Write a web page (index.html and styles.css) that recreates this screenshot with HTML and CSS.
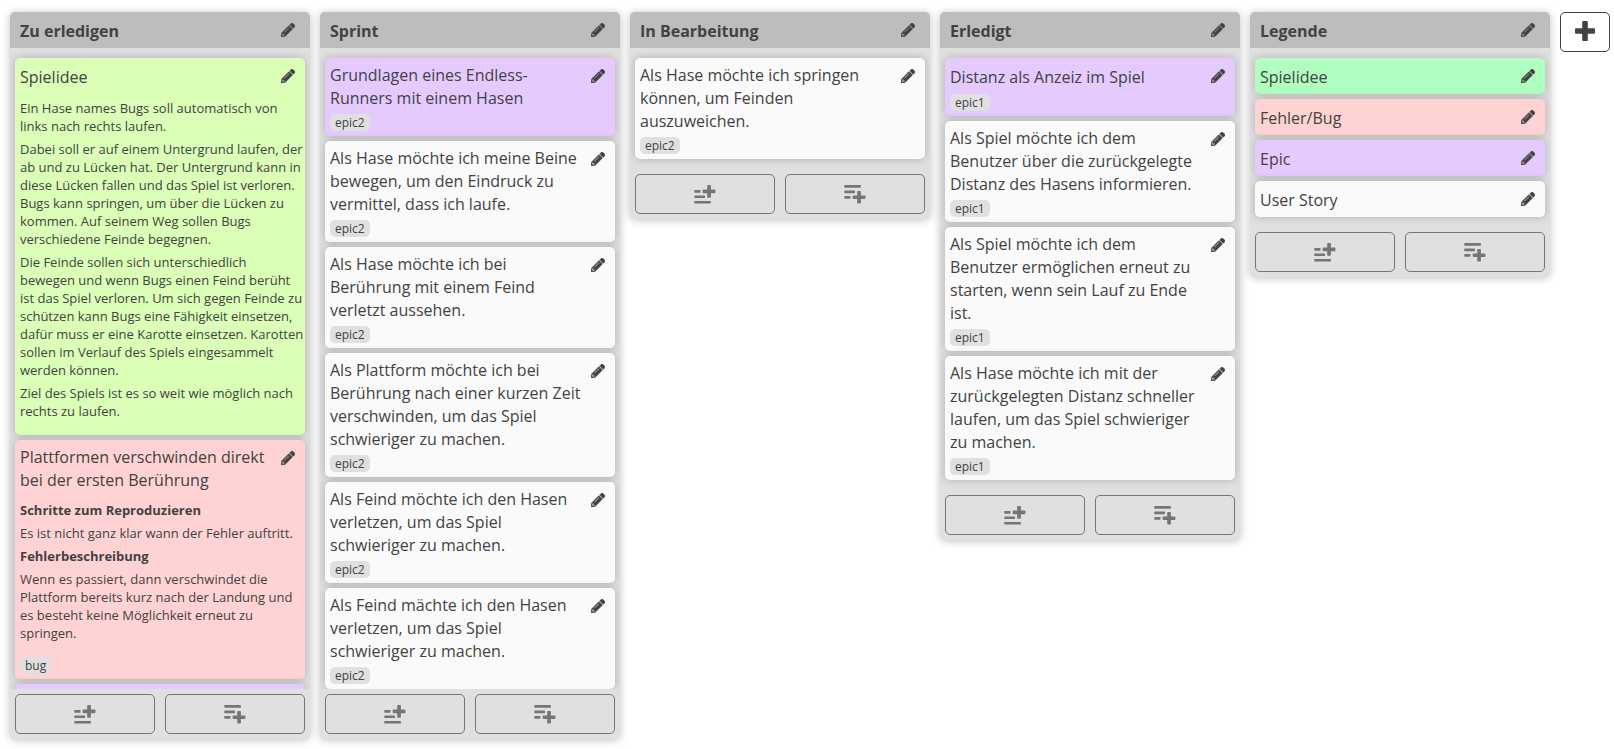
FILE: index.html
```html
<!DOCTYPE html>
<html lang="de">
<head>
<meta charset="utf-8">
<title>Kanban</title>
<link rel="stylesheet" href="styles.css">
</head>
<body>
<svg class="sprite" aria-hidden="true">
  <symbol id="pencil" viewBox="0 0 512 512"><path stroke="currentColor" stroke-width="16" d="M497.9 142.1l-46.1 46.1c-4.7 4.7-12.3 4.7-17 0l-111-111c-4.7-4.7-4.7-12.3 0-17l46.1-46.1c18.7-18.7 49.1-18.7 67.9 0l60.1 60.1c18.8 18.7 18.8 49.1 0 67.9zM284.2 99.8L21.6 362.4.4 483.9c-2.9 16.4 11.4 30.6 27.8 27.8l121.5-21.3 262.6-262.6c4.7-4.7 4.7-12.3 0-17l-111-111c-4.8-4.7-12.4-4.7-17.1 0zM124.1 339.9c-5.5-5.5-5.5-14.3 0-19.8l154-154c5.5-5.5 14.3-5.5 19.8 0s5.5 14.3 0 19.8l-154 154c-5.5 5.5-14.3 5.5-19.8 0zM88 424h48v36.3l-64.5 11.3-31.1-31.1L51.7 376H88v48z"/></symbol>
  <symbol id="plus" viewBox="0 0 20 20"><path d="M8.2 0h3.6q1 0 1 1v6.200H19q1 0 1 1v3.600q0 1-1 1h-6.200V19q0 1-1 1H8.200q-1 0-1-1v-6.200H1q-1 0-1-1V8.200q0-1 1-1h6.200V1q0-1 1-1z"/></symbol>
  <symbol id="add-top" viewBox="0 0 22 20">
    <rect x=".3" y="6" width="6.200" height="2.700" rx=".6"/>
    <rect x=".3" y="11.400" width="10.700" height="2.700" rx=".6"/>
    <rect x=".3" y="16.900" width="16.600" height="2.700" rx=".6"/>
    <rect x="8.700" y="5.500" width="12.700" height="3.700" rx=".8"/>
    <rect x="13.200" y="1" width="3.700" height="12.700" rx=".8"/>
  </symbol>
  <symbol id="add-bottom" viewBox="0 0 22 20">
    <rect x=".3" y="1" width="16.600" height="2.700" rx=".6"/>
    <rect x=".3" y="6.500" width="10.700" height="2.700" rx=".6"/>
    <rect x=".3" y="12" width="6.200" height="2.700" rx=".6"/>
    <rect x="8.700" y="11.400" width="12.700" height="3.700" rx=".8"/>
    <rect x="13.200" y="6.900" width="3.700" height="12.700" rx=".8"/>
  </symbol>
</svg>

<main class="board" id="board"></main>
<script src="board.js"></script>
</body>
</html>
```
FILE: styles.css
```css
* { box-sizing: border-box; }

body {
  margin: 0;
  background: #fff;
  color: #424242;
  font: 16px/23px "Open Sans", "Noto Sans", sans-serif;
}

.sprite { display: none; }

.icon { display: block; overflow: visible; fill: currentColor; }
.icon-pencil { width: 14px; height: 14px; }
.icon-plus { width: 20px; height: 20px; }
.icon-add { width: 22px; height: 20px; }

button {
  display: flex;
  align-items: center;
  justify-content: center;
  padding: 0;
  border: 0;
  background: none;
  color: inherit;
  font: inherit;
  cursor: pointer;
}

.board {
  display: flex;
  align-items: flex-start;
  gap: 10px;
  height: 100vh;
  padding: 12px 0 10px 10px;
  overflow: hidden;
}

.column {
  display: flex;
  flex: 0 0 300px;
  flex-direction: column;
  max-height: 100%;
  border-radius: 5px;
  background: #e0e0e0;
  box-shadow: 0 1px 8px rgba(0, 0, 0, 0.25);
}

.column-head {
  display: flex;
  flex: none;
  align-items: center;
  justify-content: space-between;
  padding: 5px 10px;
  border-radius: 5px 5px 0 0;
  background: #bdbdbd;
}

.column-title,
.card-title {
  margin: 1px 0 -1px;
  font-size: 16px;
}

.column-title { font-weight: 700; }

.card-title { align-self: center; font-weight: 400; }

.edit { flex: none; width: 24px; height: 26px; }

.cards {
  display: flex;
  flex-direction: column;
  gap: 5px;
  min-height: 0;
  padding: 10px 5px;
  overflow: hidden;
}

.card {
  flex: none;
  padding: 5px 1px 5px 5px;
  border-radius: 5px;
  background: #fafafa;
  box-shadow: 0 0 8px rgba(0, 0, 0, 0.22);
}

.card-lime { background: #dbffb7; }
.card-green { background: #b0ffc1; }
.card-red { background: #ffd3d3; }
.card-purple { background: #e4caff; }

.card-head {
  display: flex;
  align-items: flex-start;
  justify-content: space-between;
  gap: 5px;
  padding-right: 4px;
}

.card-text { padding: 10px 0; font-size: 13px; line-height: 18px; }
.card-text p { margin: 0; }
.card-text p + p { margin-top: 5px; }

.tags { display: flex; gap: 5px; margin-top: 5px; }

.tag {
  padding: 0 5px;
  border-radius: 5px;
  background: #e0e0e0;
  font-size: 12px;
  line-height: 17px;
}

.column-foot {
  display: grid;
  flex: none;
  grid-template-columns: 1fr 1fr;
  gap: 10px;
  padding: 5px;
}

.add-card {
  height: 40px;
  border: 1px solid #757575;
  border-radius: 5px;
  color: #757575;
}

.add-column {
  flex: 0 0 50px;
  height: 40px;
  padding-bottom: 2px;
  border: 1px solid #424242;
  border-radius: 5px;
}
```
FILE: board.js
```js
const columns = [
  { title: "Zu erledigen", cards: [
    { title: "Spielidee", color: "lime", text: [
      "Ein Hase names Bugs soll automatisch von links nach rechts laufen.",
      "Dabei soll er auf einem Untergrund laufen, der ab und zu Lücken hat. Der Untergrund kann in diese Lücken fallen und das Spiel ist verloren. Bugs kann springen, um über die Lücken zu kommen. Auf seinem Weg sollen Bugs verschiedene Feinde begegnen.",
      "Die Feinde sollen sich unterschiedlich bewegen und wenn Bugs einen Feind berüht ist das Spiel verloren. Um sich gegen Feinde zu schützen kann Bugs eine Fähigkeit einsetzen, dafür muss er eine Karotte einsetzen. Karotten sollen im Verlauf des Spiels eingesammelt werden können.",
      "Ziel des Spiels ist es so weit wie möglich nach rechts zu laufen."
    ] },
    { title: "Plattformen verschwinden direkt bei der ersten Berührung", color: "red", tag: "bug", text: [
      "<strong>Schritte zum Reproduzieren</strong>",
      "Es ist nicht ganz klar wann der Fehler auftritt.",
      "<strong>Fehlerbeschreibung</strong>",
      "Wenn es passiert, dann verschwindet die Plattform bereits kurz nach der Landung und es besteht keine Möglichkeit erneut zu springen."
    ] },
    { title: "", color: "purple" }
  ] },
  { title: "Sprint", cards: [
    { title: "Grundlagen eines Endless-Runners mit einem Hasen", color: "purple", tag: "epic2" },
    { title: "Als Hase möchte ich meine Beine bewegen, um den Eindruck zu vermittel, dass ich laufe.", tag: "epic2" },
    { title: "Als Hase möchte ich bei Berührung mit einem Feind verletzt aussehen.", tag: "epic2" },
    { title: "Als Plattform möchte ich bei Berührung nach einer kurzen Zeit verschwinden, um das Spiel schwieriger zu machen.", tag: "epic2" },
    { title: "Als Feind möchte ich den Hasen verletzen, um das Spiel schwieriger zu machen.", tag: "epic2" },
    { title: "Als Feind mächte ich den Hasen verletzen, um das Spiel schwieriger zu machen.", tag: "epic2" }
  ] },
  { title: "In Bearbeitung", cards: [
    { title: "Als Hase möchte ich springen können, um Feinden auszuweichen.", tag: "epic2" }
  ] },
  { title: "Erledigt", cards: [
    { title: "Distanz als Anzeiz im Spiel", color: "purple", tag: "epic1" },
    { title: "Als Spiel möchte ich dem Benutzer über die zurückgelegte Distanz des Hasens informieren.", tag: "epic1" },
    { title: "Als Spiel möchte ich dem Benutzer ermöglichen erneut zu starten, wenn sein Lauf zu Ende ist.", tag: "epic1" },
    { title: "Als Hase möchte ich mit der zurückgelegten Distanz schneller laufen, um das Spiel schwieriger zu machen.", tag: "epic1" }
  ] },
  { title: "Legende", cards: [
    { title: "Spielidee", color: "green" },
    { title: "Fehler/Bug", color: "red" },
    { title: "Epic", color: "purple" },
    { title: "User Story" }
  ] }
];

const icon = (id, kind) =>
  `<svg class="icon icon-${kind}" aria-hidden="true"><use href="#${id}"/></svg>`;

const editButton = `<button class="edit" type="button" aria-label="Bearbeiten">${icon("pencil", "pencil")}</button>`;

const renderCard = ({ title, color, text, tag }) => `
  <article class="card${color ? ` card-${color}` : ""}">
    <div class="card-head"><h3 class="card-title">${title}</h3>${editButton}</div>
    ${text ? `<div class="card-text">${text.map((p) => `<p>${p}</p>`).join("")}</div>` : ""}
    ${tag ? `<div class="tags"><span class="tag">${tag}</span></div>` : ""}
  </article>`;

const renderColumn = ({ title, cards }) => `
  <section class="column">
    <header class="column-head"><h2 class="column-title">${title}</h2>${editButton}</header>
    <div class="cards">${cards.map(renderCard).join("")}</div>
    <footer class="column-foot">
      <button class="add-card" type="button" aria-label="Oben hinzufügen">${icon("add-top", "add")}</button>
      <button class="add-card" type="button" aria-label="Unten hinzufügen">${icon("add-bottom", "add")}</button>
    </footer>
  </section>`;

document.getElementById("board").innerHTML =
  columns.map(renderColumn).join("") +
  `<button class="add-column" type="button" aria-label="Spalte hinzufügen">${icon("plus", "plus")}</button>`;
```
